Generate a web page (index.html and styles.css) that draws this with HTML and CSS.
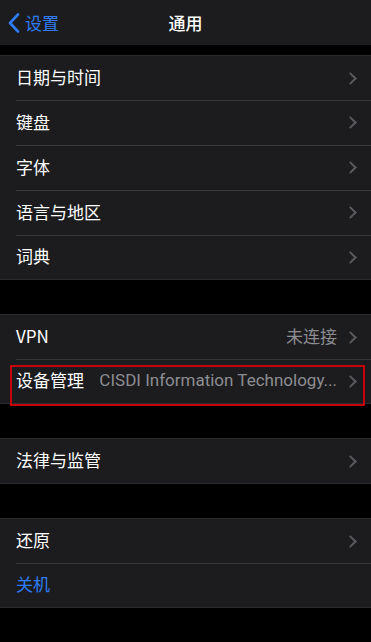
FILE: index.html
```html
<!DOCTYPE html>
<html lang="zh">
<head>
<meta charset="utf-8">
<link rel="stylesheet" href="styles.css">
</head>
<body>
<div class="screen">
  <header class="nav">
    <div class="back">
      <svg class="back-chev" width="12" height="20" viewBox="0 0 12 20"><path d="M10 1.5 L2 10 L10 18.5" fill="none" stroke="#2f7cf6" stroke-width="2.6" stroke-linecap="round" stroke-linejoin="round"/></svg>
      <span>设置</span>
    </div>
    <div class="title">通用</div>
  </header>

  <section class="group g1">
    <div class="row"><span class="label">日期与时间</span><span class="chev"></span></div>
    <div class="row"><span class="label">键盘</span><span class="chev"></span></div>
    <div class="row"><span class="label">字体</span><span class="chev"></span></div>
    <div class="row"><span class="label">语言与地区</span><span class="chev"></span></div>
    <div class="row"><span class="label">词典</span><span class="chev"></span></div>
  </section>

  <section class="group g2">
    <div class="row"><span class="label">VPN</span><span class="detail">未连接</span><span class="chev"></span></div>
    <div class="row marked"><span class="label">设备管理</span><span class="detail latin">CISDI Information Technology...</span><span class="chev"></span><div class="mark"></div></div>
  </section>

  <section class="group g3">
    <div class="row"><span class="label">法律与监管</span><span class="chev"></span></div>
  </section>

  <section class="group g4">
    <div class="row"><span class="label">还原</span><span class="chev"></span></div>
    <div class="row"><span class="label blue">关机</span></div>
  </section>
</div>
</body>
</html>
```
FILE: styles.css
```css
* { box-sizing: border-box; }
html, body { margin: 0; padding: 0; background: #000; }
body {
  font-family: "Noto Sans CJK SC", "Noto Sans", sans-serif;
  color: #fff;
}
.screen { width: 371px; height: 642px; overflow: hidden; background: #000; }

.nav {
  height: 45px;
  background: #1c1c1e;
  position: relative;
  display: flex;
  align-items: center;
  justify-content: center;
}
.back {
  position: absolute;
  left: 8px;
  top: 0;
  height: 45px;
  display: flex;
  align-items: center;
  gap: 5px;
  color: #2f7cf6;
  font-size: 17px;
}
.back-chev { display: block; }
.title { font-size: 17px; font-weight: 500; color: #fff; }

.group {
  background: #1c1c1e;
  border-top: 1px solid #2c2c2e;
  border-bottom: 1px solid #2c2c2e;
}
.g1 { margin-top: 10px; }
.g2 { margin-top: 34px; }
.g3 { margin-top: 34px; }
.g4 { margin-top: 34px; }

.row {
  height: 45px;
  display: flex;
  align-items: center;
  padding: 0 15px 0 16px;
  position: relative;
  font-size: 17px;
  line-height: 22px;
}
.row:first-child, .row:last-child { height: 44px; }
.row .label, .row .detail { position: relative; top: -1px; }
.row + .row::before {
  content: "";
  position: absolute;
  left: 16px;
  right: 0;
  top: -0.5px;
  height: 1px;
  background: #38383a;
}
.label { flex: 0 0 auto; color: #fff; }
.label.blue { color: #2f7cf6; }
.detail {
  margin-left: auto;
  color: #8d8d92;
  white-space: nowrap;
}
.detail.latin {
  font-family: Roboto, "Noto Sans CJK SC", sans-serif;
  font-size: 17px;
  margin-left: auto;
}
.chev {
  width: 8px;
  height: 13px;
  margin-left: auto;
  flex: 0 0 auto;
  position: relative;
}
.detail + .chev { margin-left: 11px; }
.chev::before {
  content: "";
  position: absolute;
  left: -2px;
  top: 2px;
  width: 7px;
  height: 7px;
  border-top: 2px solid #5a5a5f;
  border-right: 2px solid #5a5a5f;
  transform: rotate(45deg);
}
.mark {
  position: absolute;
  left: 10px;
  right: 6px;
  top: 6px;
  bottom: -3px;
  border: 2px solid #c8000a;
  pointer-events: none;
}
```
